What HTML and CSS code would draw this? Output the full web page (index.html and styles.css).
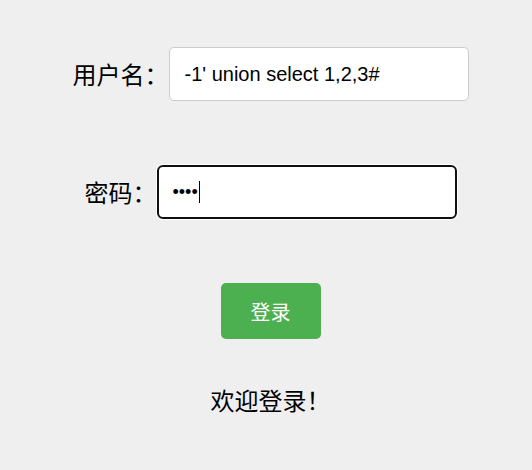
FILE: index.html
```html
<!DOCTYPE html>
<html lang="zh-CN">
<head>
<meta charset="utf-8">
<title>登录</title>
<link rel="stylesheet" href="styles.css">
</head>
<body>
<form class="login">
  <div class="row">
    <label class="label" for="user">用户名：</label>
    <input class="field" id="user" type="text" value="-1' union select 1,2,3#">
  </div>
  <div class="row">
    <label class="label">密码：</label>
    <div class="field field--focus"><span class="dots">••••</span><span class="caret"></span></div>
  </div>
  <button class="btn" type="button">登录</button>
  <p class="welcome">欢迎登录！</p>
</form>
</body>
</html>
```
FILE: styles.css
```css
html, body {
  margin: 0;
  padding: 0;
  background: #efefef;
}
body {
  width: 532px;
  height: 470px;
  overflow: hidden;
  font-family: "Noto Sans CJK SC", "Liberation Sans", sans-serif;
  color: #000;
}
.login {
  display: flex;
  flex-direction: column;
  align-items: center;
  padding: 47px 0 0 9px;
  margin: 0;
}
.row {
  display: flex;
  align-items: center;
  height: 54px;
  margin-bottom: 64px;
}
.label {
  font-size: 24px;
  line-height: 30px;
  white-space: nowrap;
}
.field {
  box-sizing: border-box;
  width: 300px;
  height: 54px;
  margin: 0;
  padding: 0 15px;
  border: 1px solid #cccccc;
  border-radius: 5px;
  background: #fff;
  font-family: "Liberation Sans", Arial, sans-serif;
  font-size: 20px;
  color: #000;
  outline: none;
}
.field--focus {
  display: flex;
  align-items: center;
  border: 2px solid #101010;
  border-radius: 6px;
  box-shadow: 0 0 0 1px #fff;
  padding: 0 0 0 14px;
}
.dots {
  font-family: "Liberation Sans", Arial, sans-serif;
  font-size: 18px;
  line-height: 22px;
  letter-spacing: 0;
}
.caret {
  display: inline-block;
  width: 1px;
  height: 22px;
  margin-left: 1px;
  background: #000;
}
.btn {
  box-sizing: border-box;
  width: 100px;
  height: 56px;
  margin: 0;
  padding: 0;
  border: none;
  border-radius: 5px;
  background: #4caf50;
  color: #fff;
  font-family: "Noto Sans CJK SC", sans-serif;
  font-size: 20px;
}
.welcome {
  margin: 45px 0 0;
  font-size: 24px;
  line-height: 32px;
}
```
